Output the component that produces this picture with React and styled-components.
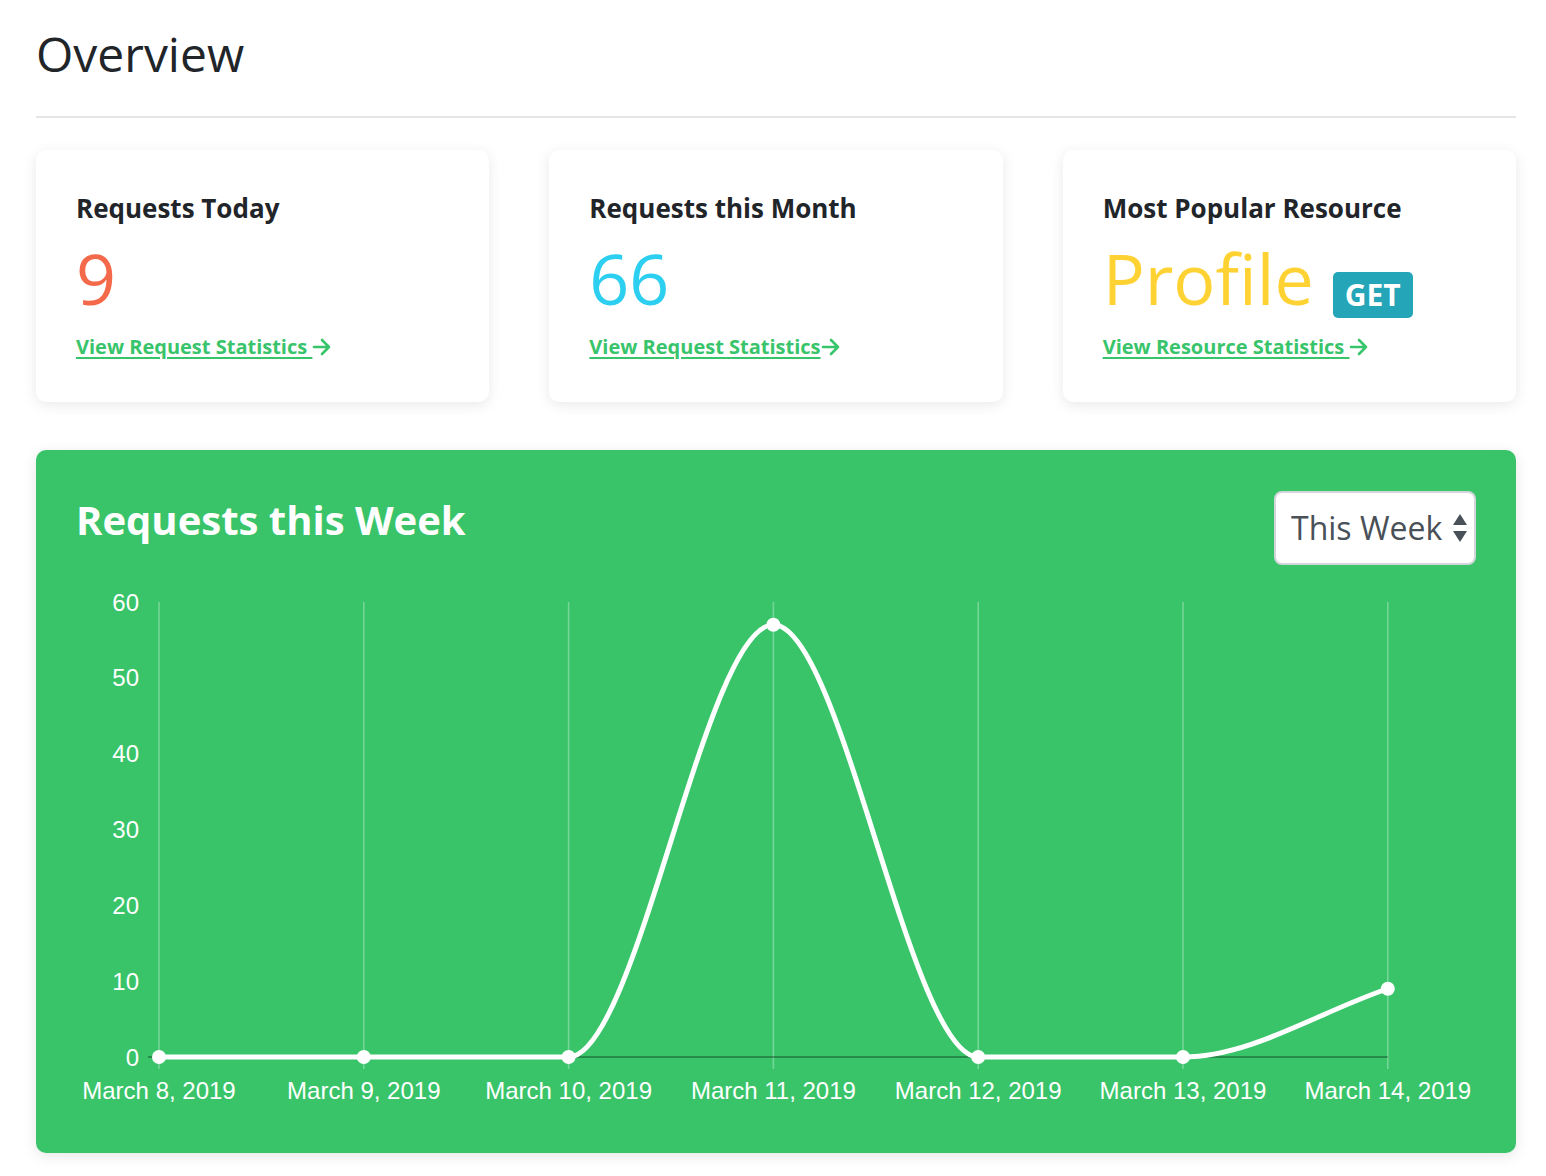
import React from 'react';
import styled, { createGlobalStyle } from 'styled-components';

const GlobalStyle = createGlobalStyle`
	body {
		margin: 0;
		background: #fff;
		font-family: 'Open Sans', 'Liberation Sans', sans-serif;
		color: #212529;
	}
`

const Page = styled.main`
	padding: 25px 30px 23px 36px;
`
const Heading = styled.h1`
	margin: 0;
	font-size: 48px;
	font-weight: 400;
	line-height: 1.2;
	color: #212529;
`
const Rule = styled.hr`
	margin: 33px 0 32px;
	border: 0;
	border-top: 2px solid #e6e6e6;
`
const CardRow = styled.section`
	display: grid;
	grid-template-columns: repeat(3, 1fr);
	gap: 60px;
	margin-bottom: 48px;
`
const Card = styled.div`
	background: #fff;
	border-radius: 10px;
	box-shadow: 0 3px 14px rgba(0, 0, 0, 0.09);
	padding: 43px 40px 43px;
`
const CardTitle = styled.h3`
	margin: 0;
	font-size: 26px;
	font-weight: 700;
	line-height: 1.2;
	color: #212529;
`
const ValueRow = styled.div`
	display: flex;
	align-items: flex-end;
	margin: 15px 0 17px;
`
const Value = styled.span`
	font-size: 70px;
	line-height: 1.13;
	font-weight: 400;
	color: ${p => p.color};
`
const Badge = styled.span`
	margin: 0 0 0 19px;
	padding: 8px 12px;
	border-radius: 5px;
	background: #25a5b8;
	color: #fff;
	font-size: 30px;
	font-weight: 700;
	line-height: 1;
`
const StatLink = styled.a`
	display: inline-flex;
	align-items: center;
	font-size: 20px;
	font-weight: 700;
	line-height: 1.2;
	color: #38c46a;
	text-decoration: none;
	cursor: pointer;

	& > span {
		text-decoration: underline;
		text-decoration-thickness: 2px;
		text-underline-offset: 3px;
		white-space: pre;
	}
`
const ChartCard = styled.section`
	background: #39c46a;
	border-radius: 10px;
	box-shadow: 0 3px 14px rgba(0, 0, 0, 0.1);
	padding: 41px 40px 40px;
`
const ChartHeader = styled.div`
	display: flex;
	align-items: flex-start;
	justify-content: space-between;
	margin-bottom: 15px;
`
const ChartTitle = styled.h2`
	margin: 5px 0 0;
	font-size: 40px;
	font-weight: 700;
	line-height: 1.2;
	color: #fff;
`
const SelectWrap = styled.div`
	position: relative;
	width: 202px;
	height: 74px;
`
const Select = styled.select`
	appearance: none;
	width: 100%;
	height: 100%;
	padding: 0 24px 0 15px;
	border: 2px solid #d2d6da;
	border-radius: 8px;
	background: #fff;
	color: #495057;
	font-family: 'Open Sans', sans-serif;
	font-size: 32px;
	outline: none;
`
const Spinner = styled.svg`
	position: absolute;
	right: 8px;
	top: 22px;
	pointer-events: none;
`
const ChartSvg = styled.svg`
	display: block;
`

const Arrow = () => (
	<svg width='19' height='18' viewBox='0 0 19 18' fill='none' stroke='#38c46a' strokeWidth='2.6' strokeLinecap='round' strokeLinejoin='round'>
		<path d='M2 9h15M10 2l7 7-7 7' />
	</svg>
)

const stats = [
	{ title: 'Requests Today', value: '9', color: '#f5694b', link: 'View Request Statistics ' },
	{ title: 'Requests this Month', value: '66', color: '#2ccfef', link: 'View Request Statistics' },
	{ title: 'Most Popular Resource', value: 'Profile', color: '#ffd234', link: 'View Resource Statistics ', badge: 'GET' },
]

const labels = ['March 8, 2019', 'March 9, 2019', 'March 10, 2019', 'March 11, 2019', 'March 12, 2019', 'March 13, 2019', 'March 14, 2019']
const data = [0, 0, 0, 57, 0, 0, 9]

const W = 1400
const H = 533
const X0 = 83
const STEP = 204.8
const ZERO = 477
const TOP = 22
const px = (i) => X0 + i * STEP
const py = (v) => ZERO - v * (ZERO - TOP) / 60

// monotone cubic, same as chart.js cubicInterpolationMode: 'monotone'
function monotonePath(pts) {
	const n = pts.length;
	const d = [];
	for (let i = 0; i < n - 1; i++) d.push((pts[i + 1][1] - pts[i][1]) / (pts[i + 1][0] - pts[i][0]));
	const m = pts.map((_, i) => {
		if (i === 0) return d[0];
		if (i === n - 1) return d[n - 2];
		if (d[i - 1] * d[i] <= 0) return 0;
		return (d[i - 1] + d[i]) / 2;
	});
	for (let i = 0; i < n - 1; i++) {
		if (d[i] === 0) { m[i] = 0; m[i + 1] = 0; continue; }
		const a = m[i] / d[i], b = m[i + 1] / d[i], s = a * a + b * b;
		if (s > 9) { const t = 3 / Math.sqrt(s); m[i] = t * a * d[i]; m[i + 1] = t * b * d[i]; }
	}
	let path = `M${pts[0][0]},${pts[0][1]}`;
	for (let i = 0; i < n - 1; i++) {
		const h = (pts[i + 1][0] - pts[i][0]) / 3;
		path += ` C${pts[i][0] + h},${pts[i][1] + m[i] * h} ${pts[i + 1][0] - h},${pts[i + 1][1] - m[i + 1] * h} ${pts[i + 1][0]},${pts[i + 1][1]}`;
	}
	return path;
}

function WeekChart() {
	const pts = data.map((v, i) => [px(i), py(v)]);
	const font = { fontFamily: "'Liberation Sans', Arial, sans-serif", fontSize: 24, fill: '#fff' };

	return (
		<ChartSvg width={W} height={H} viewBox={`0 0 ${W} ${H}`}>
			{labels.map((_, i) => (
				<line key={i} x1={px(i)} x2={px(i)} y1={TOP} y2={489} stroke='rgba(255,255,255,0.3)' strokeWidth='1.6' />
			))}
			<line x1={72} x2={px(6)} y1={ZERO} y2={ZERO} stroke='rgba(0,0,0,0.3)' strokeWidth='2' />
			{[0, 10, 20, 30, 40, 50, 60].map(v => (
				<text key={v} x={63} y={py(v)} textAnchor='end' dominantBaseline='central' {...font}>{v}</text>
			))}
			{labels.map((l, i) => (
				<text key={l} x={px(i)} y={510} textAnchor='middle' dominantBaseline='central' {...font}>{l}</text>
			))}
			<path d={monotonePath(pts)} fill='none' stroke='#fff' strokeWidth='5' />
			{pts.map(([x, y], i) => <circle key={i} cx={x} cy={y} r='7' fill='#fff' />)}
		</ChartSvg>
	)
}

export default function App() {
	return (
		<Page>
			<GlobalStyle />
			<Heading>Overview</Heading>
			<Rule />

			<CardRow>
				{stats.map(s => (
					<Card key={s.title}>
						<CardTitle>{s.title}</CardTitle>
						<ValueRow>
							<Value color={s.color}>{s.value}</Value>
							{s.badge && <Badge>{s.badge}</Badge>}
						</ValueRow>
						<StatLink><span>{s.link}</span><Arrow /></StatLink>
					</Card>
				))}
			</CardRow>

			<ChartCard>
				<ChartHeader>
					<ChartTitle>Requests this Week</ChartTitle>
					<SelectWrap>
						<Select defaultValue='week'>
							<option value='week'>This Week</option>
							<option value='month'>This Month</option>
						</Select>
						<Spinner width='16' height='30' viewBox='0 0 16 30' fill='#495057'>
							<path d='M8 1l7 11H1z' />
							<path d='M8 29l7-11H1z' />
						</Spinner>
					</SelectWrap>
				</ChartHeader>
				<WeekChart />
			</ChartCard>
		</Page>
	)
}
